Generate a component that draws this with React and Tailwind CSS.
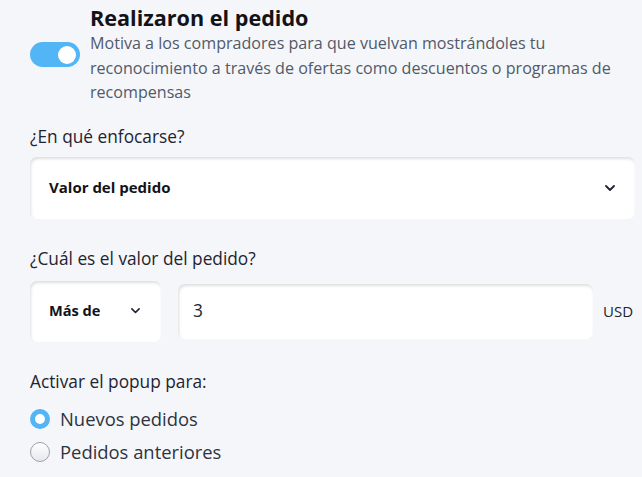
import React from "react";

function Chevron({ w = 10 }) {
  return (
    <svg width={w} height={w * 0.6} viewBox="0 0 10 6" fill="none">
      <path d="M1 1l4 4 4-4" stroke="#1f2430" strokeWidth="1.8" strokeLinecap="round" strokeLinejoin="round" />
    </svg>
  );
}

export default function App() {
  return (
    <div className="w-[642px] h-[477px] bg-[#f5f6fa] overflow-hidden pl-[30px] pr-[7px] text-[17.3px] text-[#1e2430]" style={{ fontFamily: "'Open Sans', 'Noto Sans', sans-serif" }}>
      <div className="flex">
        <div className="mt-[42px] w-[50px] h-[25px] rounded-full bg-[#52b5f5] flex items-center justify-end pr-[4px] shrink-0">
          <div className="w-[18px] h-[18px] rounded-full bg-white" />
        </div>
        <div className="ml-[10px] mt-[5px]">
          <div className="text-[21.6px] leading-[26px] font-bold text-[#121318]">Realizaron el pedido</div>
          <div className="text-[16.1px] leading-[24.5px] text-[#505a69]">
            Motiva a los compradores para que vuelvan mostrándoles tu reconocimiento a través de ofertas como descuentos o programas de recompensas
          </div>
        </div>
      </div>

      <div className="mt-[20px] leading-[24px]">¿En qué enfocarse?</div>
      <div className="mt-[8px] h-[62px] bg-white rounded-[7px] shadow-[inset_1px_2px_3px_rgba(0,0,0,0.13)] flex items-center justify-between pl-[19px] pr-[20px]">
        <span className="font-bold text-[15px] text-[#121318]">Valor del pedido</span>
        <Chevron w={10} />
      </div>

      <div className="mt-[28px] leading-[24px]">¿Cuál es el valor del pedido?</div>
      <div className="mt-[10px] flex items-center">
        <div className="w-[131px] h-[61px] bg-white rounded-[7px] shadow-[inset_1px_2px_3px_rgba(0,0,0,0.13)] flex items-center justify-between pl-[19px] pr-[21px] shrink-0">
          <span className="font-bold text-[14.6px] text-[#121318]">Más de</span>
          <Chevron w={9} />
        </div>
        <div className="ml-[17px] w-[415px] h-[55px] bg-white rounded-[7px] shadow-[inset_1px_2px_3px_rgba(0,0,0,0.13)] flex items-center pl-[15px] shrink-0">
          <span className="text-[17.3px] text-[#1e2430]">3</span>
        </div>
        <span className="ml-[10px] text-[15px] text-[#1e2430]">USD</span>
      </div>

      <div className="mt-[28px] leading-[24px]">Activar el popup para:</div>
      <div className="mt-[9px] h-[33px] flex items-center">
        <div className="w-[20px] h-[20px] rounded-full border-[5px] border-[#52b5f5] bg-white shrink-0" />
        <span className="ml-[10px] text-[18.4px] text-[#2d3340]">Nuevos pedidos</span>
      </div>
      <div className="h-[33px] flex items-center">
        <div className="w-[20px] h-[20px] rounded-full border border-[#9aa1ad] bg-gradient-to-b from-white to-[#e6e8ec] shrink-0" />
        <span className="ml-[10px] text-[18.4px] text-[#2d3340]">Pedidos anteriores</span>
      </div>
    </div>
  );
}
